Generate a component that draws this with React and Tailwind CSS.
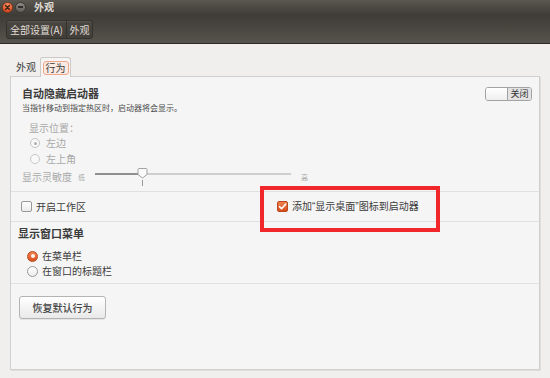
import React from "react";

const Radio = ({ checked }) => {
  if (checked) {
    return (
      <span className="w-[11px] h-[11px] rounded-full border border-[#b8481c] bg-gradient-to-b from-[#f3824f] to-[#db4d1c] flex items-center justify-center">
        <span className="w-[4px] h-[4px] rounded-full bg-[#fff3ec]"></span>
      </span>
    );
  }
  return (
    <span className="w-[11px] h-[11px] rounded-full border border-[#9a9a9a] bg-gradient-to-b from-white to-[#ececec]"></span>
  );
};

const Checkbox = ({ checked }) =>
  checked ? (
    <span className="w-[11px] h-[11px] rounded-[2px] border border-[#b8481c] bg-gradient-to-b from-[#f0804c] to-[#d84d1c] flex items-center justify-center">
      <svg width="9" height="9" viewBox="0 0 9 9">
        <path d="M1.5 4.6 L3.6 6.7 L7.6 2.2" fill="none" stroke="#fff" strokeWidth="1.6" strokeLinecap="round" strokeLinejoin="round" />
      </svg>
    </span>
  ) : (
    <span className="w-[11px] h-[11px] rounded-[2px] border border-[#9a9a9a] bg-gradient-to-b from-white to-[#ececec]"></span>
  );

export default function App() {
  return (
    <div className="relative w-[550px] h-[378px] overflow-hidden bg-[#f0efed] text-[#3c3c3c] font-['Noto_Sans_CJK_SC','Noto_Sans',sans-serif]">
      {/* Header: title bar + toolbar */}
      <div className="h-[44px] border-b border-[#2c2b28] bg-linear-to-b from-[#5b5751] via-[#3e3c37] via-35% to-[#57534d]">
        <div className="h-[13px] flex items-center pl-[2px] pt-[1px]">
          <span className="w-[11px] h-[11px] rounded-full border border-[#8e3416] bg-gradient-to-b from-[#f58a5c] to-[#dc4719] flex items-center justify-center">
            <svg width="7" height="7" viewBox="0 0 7 7">
              <path d="M1.5 1.5 L5.5 5.5 M5.5 1.5 L1.5 5.5" stroke="#3b2418" strokeWidth="1.3" strokeLinecap="round" />
            </svg>
          </span>
          <span className="ml-[2px] w-[11px] h-[11px] rounded-full border border-[#3a3934] bg-gradient-to-b from-[#8f8c86] to-[#5f5c57] flex items-center justify-center">
            <span className="w-[5px] h-[1.5px] bg-[#2f2e2a]"></span>
          </span>
          <span className="ml-[8px] text-[10px] leading-[12px] font-bold text-[#dfdbd2]">外观</span>
        </div>
        <div className="pl-[6px] pt-[7px] flex">
          <div className="h-[19px] flex rounded-[3px] border border-[#34322e] bg-linear-to-b from-[#4a4742] to-[#423f3b] shadow-[inset_0_1px_0_#57544e]">
            <span className="w-[60px] flex items-center justify-center text-[10px] text-[#e0ddd5] border-r border-[#34322e]">全部设置(A)</span>
            <span className="w-[25px] flex items-center justify-center text-[10px] text-[#e0ddd5]">外观</span>
          </div>
        </div>
      </div>

      <div className="px-[10px] pt-[12px]">
        {/* Tabs */}
        <div className="flex items-end h-[20px] pl-[2px]">
          <div className="w-[28px] h-[18px] flex items-center justify-center text-[10px] leading-[12px]">外观</div>
          <div className="relative z-10 -mb-px w-[31px] h-[20px] border border-b-0 border-[#cdcac5] rounded-t-[3px] bg-[#f5f5f5] flex items-center justify-center">
            <span className="px-[2px] h-[14px] flex items-center rounded-[3px] border border-[#f0a68a] bg-[#fbeae2] text-[10px] leading-[12px]">行为</span>
          </div>
        </div>

        {/* Panel */}
        <div className="h-[294px] flex flex-col border border-[#cfcfcf] bg-[#f5f5f5] shadow-[1px_1px_0_#e0dfdd]">
          {/* Auto-hide section */}
          <div className="h-[115px] border-b border-[#e0e0e0] pl-[11px] pr-[7px] pt-[9px]">
            <div className="flex justify-between items-start">
              <div>
                <div className="text-[11px] leading-[14px] font-bold">自动隐藏启动器</div>
                <div className="mt-[2px] text-[8px] leading-[12px] text-[#4a4a4a]">当指针移动到指定热区时，启动器将会显示。</div>
              </div>
              <div className="mt-[1px] h-[14px] w-[47px] flex rounded-[3px] border border-[#a3a3a3] overflow-hidden">
                <span className="w-[22px] border-r border-[#a3a3a3] bg-gradient-to-b from-white to-[#eeeeee]"></span>
                <span className="flex-1 flex items-center justify-center bg-[#e2e2e2] text-[9px] leading-[10px] text-[#333]">关闭</span>
              </div>
            </div>

            <div className="ml-[7px] mt-[7px] text-[#a8a8a8]">
              <div className="text-[10px] leading-[14px]">显示位置：</div>
              <div className="h-[14px] mt-[1px] flex items-center ml-[1px]">
                <span className="w-[10px] h-[10px] rounded-full border border-[#c4c4c4] bg-[#f8f8f8] flex items-center justify-center">
                  <span className="w-[3px] h-[3px] rounded-full bg-[#b0b0b0]"></span>
                </span>
                <span className="ml-[6px] text-[10px] leading-[14px]">左边</span>
              </div>
              <div className="h-[14px] mt-[2px] flex items-center ml-[1px]">
                <span className="w-[10px] h-[10px] rounded-full border border-[#c8c8c8] bg-[#f8f8f8]"></span>
                <span className="ml-[6px] text-[10px] leading-[14px]">左上角</span>
              </div>
            </div>

            <div className="mt-[4px] h-[14px] flex items-center text-[#a8a8a8]">
              <span className="w-[50px] text-[10px] leading-[14px]">显示灵敏度</span>
              <span className="ml-[6px] text-[7px] leading-[10px]">低</span>
              <div className="relative ml-[10px] w-[196px] h-[2px] mt-[-6px] flex">
                <span className="w-[46px] h-[2px] bg-[#8f8f8f]"></span>
                <span className="flex-1 h-[2px] bg-[#cfcfcf]"></span>
                <svg className="absolute left-[42px] top-[-5px]" width="11" height="19" viewBox="0 0 11 19">
                  <path d="M1 1.5 Q1 0.5 2 0.5 L9 0.5 Q10 0.5 10 1.5 L10 6.5 L5.5 10 L1 6.5 Z" fill="#fbfbfb" stroke="#a2a2a2" strokeWidth="1" />
                  <line x1="5.5" y1="12" x2="5.5" y2="18" stroke="#9a9a9a" strokeWidth="1" />
                </svg>
              </div>
              <span className="ml-[10px] text-[7px] leading-[10px]">高</span>
            </div>
          </div>

          {/* Checkbox row */}
          <div className="h-[30px] border-b border-[#e0e0e0] flex items-center">
            <div className="w-[266px] pl-[10px] flex items-center">
              <Checkbox />
              <span className="ml-[4px] text-[10px] leading-[14px]">开启工作区</span>
            </div>
            <div className="flex items-center">
              <Checkbox checked />
              <span className="ml-[4px] text-[10px] leading-[14px]">
                添加<span className="font-['Liberation_Sans',sans-serif]">“</span>显示桌面<span className="font-['Liberation_Sans',sans-serif]">”</span>图标到启动器
              </span>
            </div>
          </div>

          {/* Window menu section */}
          <div className="h-[62px] border-b border-[#e0e0e0] pl-[7px] pt-[4px]">
            <div className="text-[11px] leading-[14px] font-bold">显示窗口菜单</div>
            <div className="ml-[9px] mt-[9px] h-[14px] flex items-center">
              <Radio checked />
              <span className="ml-[4px] text-[10px] leading-[14px]">在菜单栏</span>
            </div>
            <div className="ml-[9px] mt-[1px] h-[14px] flex items-center">
              <Radio />
              <span className="ml-[4px] text-[10px] leading-[14px]">在窗口的标题栏</span>
            </div>
          </div>

          {/* Reset button */}
          <div className="flex-1 pl-[8px] pt-[9px]">
            <button className="w-[87px] h-[23px] rounded-[3px] border border-[#b4b4b4] bg-gradient-to-b from-white to-[#e9e9e9] shadow-[0_1px_0_#e4e4e4] text-[10px] font-medium text-[#444]">
              恢复默认行为
            </button>
          </div>
        </div>
      </div>

      {/* Red annotation box */}
      <div className="absolute left-[260px] top-[186px] w-[180px] h-[46px] border-4 border-[#f2272b]"></div>
    </div>
  );
}
